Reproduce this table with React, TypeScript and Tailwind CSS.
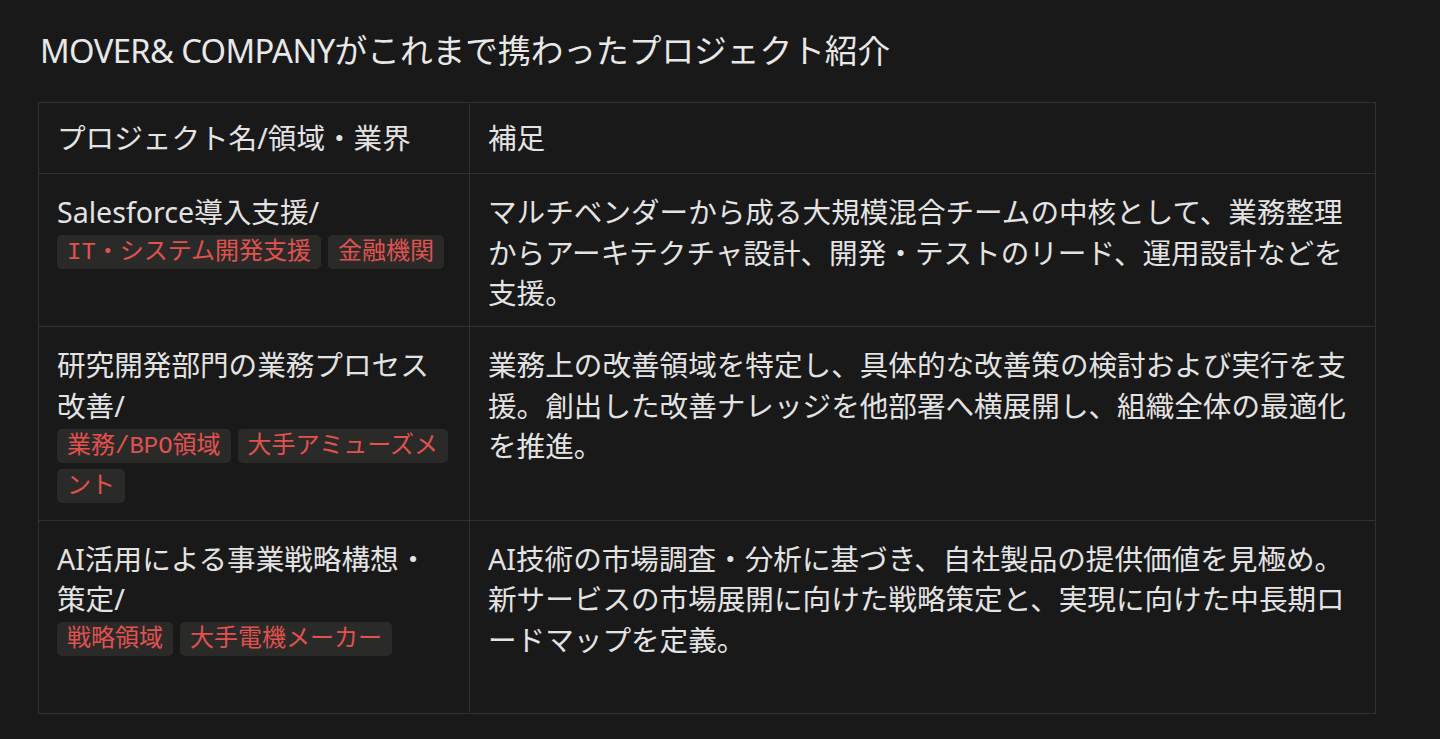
import { Fragment, type ReactNode } from 'react'

const sans = 'font-["Noto_Sans","Noto_Sans_CJK_JP",sans-serif]'

type Row = {
  name: ReactNode
  tags: string[]
  note: string
  extraLine?: boolean
}

const rows: Row[] = [
  {
    name: 'Salesforce導入支援/',
    tags: ['IT・システム開発支援', '金融機関'],
    note: 'マルチベンダーから成る大規模混合チームの中核として、業務整理からアーキテクチャ設計、開発・テストのリード、運用設計などを支援。',
  },
  {
    name: '研究開発部門の業務プロセス改善/',
    tags: ['業務/BPO領域', '大手アミューズメント'],
    note: '業務上の改善領域を特定し、具体的な改善策の検討および実行を支援。創出した改善ナレッジを他部署へ横展開し、組織全体の最適化を推進。',
  },
  {
    name: 'AI活用による事業戦略構想・策定/',
    tags: ['戦略領域', '大手電機メーカー'],
    note: 'AI技術の市場調査・分析に基づき、自社製品の提供価値を見極め。新サービスの市場展開に向けた戦略策定と、実現に向けた中長期ロードマップを定義。',
    extraLine: true,
  },
]

function Tag({ label }: { label: string }) {
  return (
    <span className='rounded-[5px] bg-[#2a2a29] px-[10px] py-[3.5px] align-[5px] font-["Liberation_Mono","Noto_Sans_CJK_JP",monospace] text-[24px] leading-none text-[#e0524f] box-decoration-clone'>
      {label}
    </span>
  )
}

export default function App() {
  return (
    <div className={`min-h-screen bg-[#191919] pl-[38px] pr-[64px] pt-[27px] text-[#e3e3e3] ${sans}`}>
      <h1 className="pl-[2px] text-[32.7px] leading-[48px] font-normal text-[#e8e8e8]">
        <span className="tracking-[-0.6px]">MOVER&amp; COMPANY</span>がこれまで携わったプロジェクト紹介
      </h1>

      <table className="mt-[27px] w-[1338px] table-fixed border-collapse text-[28.6px] leading-[40.5px]">
        <colgroup>
          <col className="w-[431px]" />
          <col />
        </colgroup>
        <thead>
          <tr>
            <th className="border border-[#313131] px-[18px] pt-[15px] pb-[14.5px] text-left align-top font-normal">
              プロジェクト名/領域・業界
            </th>
            <th className="border border-[#313131] px-[18px] pt-[15px] pb-[14.5px] text-left align-top font-normal">
              補足
            </th>
          </tr>
        </thead>
        <tbody>
          {rows.map((r, i) => (
            <tr key={i}>
              <td className="border border-[#313131] px-[18px] pt-[18px] pb-[12.5px] align-top">
                <div>{r.name}</div>
                <div>
                  {r.tags.map((t, j) => (
                    <Fragment key={t}>
                      {j > 0 && <span className="inline-block w-[7px]" />}
                      <Tag label={t} />
                    </Fragment>
                  ))}
                </div>
                {r.extraLine && <div className="h-[40.5px]" />}
              </td>
              <td className="border border-[#313131] px-[18px] pt-[18px] pb-[12.5px] align-top">
                {r.note}
              </td>
            </tr>
          ))}
        </tbody>
      </table>
    </div>
  )
}
